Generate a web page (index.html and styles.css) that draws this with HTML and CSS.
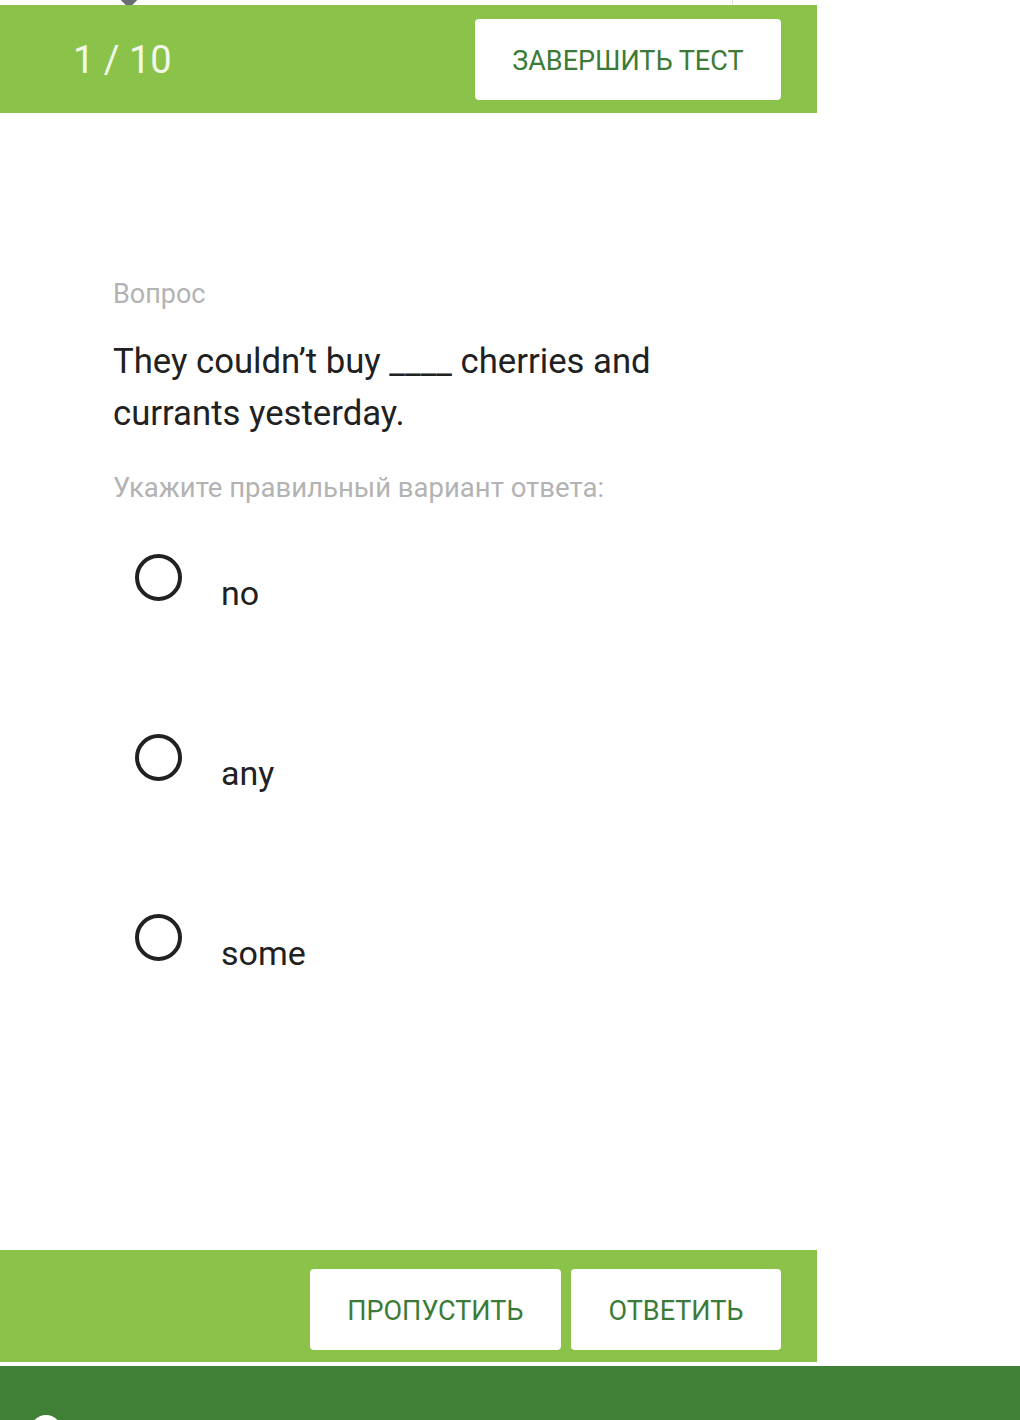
FILE: index.html
```html
<!DOCTYPE html>
<html>
<head lang="ru">
    <meta charset="UTF-8">
    <title>Тест</title>
    <link rel="stylesheet" href="styles.css">
</head>
<body>
<div class="strip">
    <span class="pin"></span>
    <span class="tick"></span>
</div>

<div class="page">
    <div class="bar bar-top">
        <div class="counter">1 / 10</div>
        <a href="#" class="btn">ЗАВЕРШИТЬ ТЕСТ</a>
    </div>

    <div class="question">
        <div class="label">Вопрос</div>
        <div class="text">They couldn’t buy ____ cherries and<br>currants yesterday.</div>
        <div class="hint">Укажите правильный вариант ответа:</div>

        <ul class="options">
            <li><span class="radio"></span><span class="answer">no</span></li>
            <li><span class="radio"></span><span class="answer">any</span></li>
            <li><span class="radio"></span><span class="answer">some</span></li>
        </ul>
    </div>

    <div class="bar bar-bottom">
        <a href="#" class="btn">ПРОПУСТИТЬ</a>
        <a href="#" class="btn">ОТВЕТИТЬ</a>
    </div>
</div>

<div class="footer">
    <span class="logo"></span>
</div>
</body>
</html>
```

FILE: styles.css
```css
* {
    padding: 0;
    margin: 0;
    list-style: none;
    box-sizing: border-box;
}

html, body {
    height: 1420px;
    overflow: hidden;
}

body {
    background-color: #fff;
    font-family: Roboto, "Noto Sans", Arial, sans-serif;
    color: #212121;
}

.strip {
    height: 5px;
    display: flex;
    overflow: hidden;
}

.pin {
    width: 16px;
    height: 16px;
    margin: -11px 0 0 121px;
    background-color: #686c73;
    transform: rotate(45deg);
}

.tick {
    width: 1px;
    height: 5px;
    margin-left: 595px;
    background-color: #e2e2e2;
}

.page {
    width: 817px;
}

.bar {
    display: flex;
    align-items: flex-start;
    background-color: #8bc34a;
    padding-right: 36px;
}

.bar-top {
    height: 108px;
    padding-top: 14px;
    justify-content: space-between;
}

.bar-bottom {
    height: 112px;
    padding-top: 19px;
    justify-content: flex-end;
    gap: 10px;
}

.counter {
    padding: 18px 0 0 73px;
    font-size: 38px;
    line-height: 46px;
    color: #f1f8e9;
}

.btn {
    display: block;
    height: 81px;
    padding: 0 37.5px;
    border-radius: 4px;
    background-color: #fff;
    color: #3c7b37;
    font-size: 27px;
    line-height: 85px;
    text-decoration: none;
}

.question {
    height: 1137px;
    padding: 165px 0 0 113px;
}

.label {
    font-size: 27px;
    line-height: 32px;
    color: #b3b3b3;
}

.text {
    margin-top: 25px;
    font-size: 34.7px;
    line-height: 52px;
    color: #212121;
}

.hint {
    margin-top: 33px;
    font-size: 27.5px;
    line-height: 32px;
    color: #b3b3b3;
}

.options {
    margin-top: 50px;
}

.options li {
    display: flex;
    align-items: flex-start;
    height: 180px;
}

.radio {
    width: 47px;
    height: 47px;
    margin-left: 22px;
    border: 4px solid #212121;
    border-radius: 50%;
}

.answer {
    margin: 19px 0 0 39px;
    font-size: 34px;
    line-height: 40px;
}

.footer {
    height: 54px;
    margin-top: 4px;
    overflow: hidden;
    background-color: #3f8036;
    padding: 49px 0 0 30px;
}

.logo {
    display: block;
    width: 32px;
    height: 32px;
    border-radius: 50%;
    background-color: #fff;
}
```
